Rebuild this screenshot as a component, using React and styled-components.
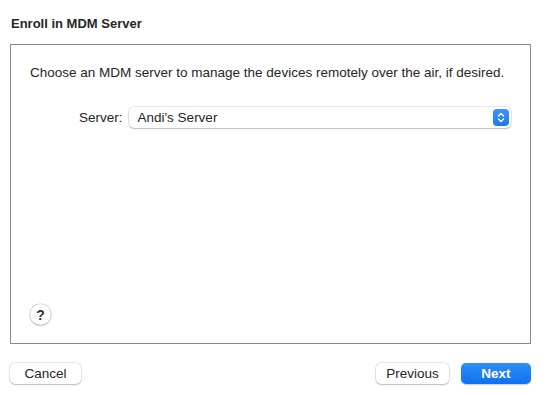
import React from "react";
import styled, { createGlobalStyle } from "styled-components";

const Global = createGlobalStyle`
  html, body { margin: 0; padding: 0; background: #ffffff; }
  body { font-family: "Liberation Sans", Arial, sans-serif; color: #262626; }
`;

const Window = styled.div`
  width: 546px;
  height: 395px;
  box-sizing: border-box;
  padding: 16px 15px 0 10px;
  display: flex;
  flex-direction: column;
`;

const Title = styled.h1`
  margin: 0 0 0 1px;
  font-size: 13px;
  line-height: 16px;
  font-weight: 700;
  color: #262626;
  height: 28px;
`;

const Panel = styled.div`
  box-sizing: border-box;
  width: 521px;
  height: 300px;
  border: 1px solid #8a8a8a;
  background: #ffffff;
  padding: 20px 19px 18px 19px;
  display: flex;
  flex-direction: column;
`;

const Intro = styled.p`
  margin: 0;
  font-size: 13.5px;
  line-height: 16px;
  color: #262626;
`;

const Row = styled.div`
  display: flex;
  align-items: center;
  margin-top: 26px;
  padding-left: 49px;
  gap: 6px;
`;

const Label = styled.span`
  font-size: 13.5px;
  color: #262626;
`;

const Select = styled.div`
  flex: 1;
  height: 21px;
  box-sizing: border-box;
  border-radius: 5px;
  background: #ffffff;
  box-shadow: 0 0 0 0.5px rgba(0, 0, 0, 0.18), 0 1px 1.5px rgba(0, 0, 0, 0.18);
  display: flex;
  align-items: center;
  padding: 0 2px 0 9px;
  font-size: 13.5px;
  color: #262626;
`;

const SelectText = styled.span`
  flex: 1;
`;

const Stepper = styled.span`
  width: 16px;
  height: 17px;
  border-radius: 4px;
  background: linear-gradient(#3d95f8, #1a79f2);
  display: flex;
  align-items: center;
  justify-content: center;
`;

const Help = styled.button`
  margin-top: auto;
  width: 21px;
  height: 21px;
  border-radius: 50%;
  border: none;
  background: #ffffff;
  box-shadow: 0 0 0 0.5px rgba(0, 0, 0, 0.22), 0 1px 1.5px rgba(0, 0, 0, 0.2);
  font-family: "Liberation Sans", Arial, sans-serif;
  font-size: 14px;
  font-weight: 700;
  color: #333;
  padding: 0;
  display: flex;
  align-items: center;
  justify-content: center;
`;

const Footer = styled.div`
  display: flex;
  align-items: center;
  margin-top: 19px;
  width: 521px;
`;

const Spacer = styled.div`
  flex: 1;
`;

const Button = styled.button`
  height: 21px;
  width: ${(p) => p.$w}px;
  margin-left: ${(p) => p.$ml || 0}px;
  border: none;
  border-radius: 5px;
  padding: 0;
  font-family: "Liberation Sans", Arial, sans-serif;
  font-size: 13.5px;
  background: ${(p) => (p.$primary ? "linear-gradient(#2f8ff8, #0f70f0)" : "#ffffff")};
  color: ${(p) => (p.$primary ? "#ffffff" : "#262626")};
  font-weight: ${(p) => (p.$primary ? 600 : 400)};
  box-shadow: ${(p) =>
    p.$primary
      ? "0 0.5px 1px rgba(0,0,0,0.2)"
      : "0 0 0 0.5px rgba(0,0,0,0.18), 0 1px 1.5px rgba(0,0,0,0.18)"};
`;

export default function App() {
  return (
    <>
      <Global />
      <Window>
        <Title>Enroll in MDM Server</Title>
        <Panel>
          <Intro>
            Choose an MDM server to manage the devices remotely over the air, if desired.
          </Intro>
          <Row>
            <Label>Server:</Label>
            <Select>
              <SelectText>Andi's Server</SelectText>
              <Stepper>
                <svg width="10" height="13" viewBox="0 0 10 13" fill="none">
                  <path d="M2.5 5 L5 2.5 L7.5 5" stroke="#fff" strokeWidth="1.5" strokeLinecap="round" strokeLinejoin="round" />
                  <path d="M2.5 8 L5 10.5 L7.5 8" stroke="#fff" strokeWidth="1.5" strokeLinecap="round" strokeLinejoin="round" />
                </svg>
              </Stepper>
            </Select>
          </Row>
          <Help>?</Help>
        </Panel>
        <Footer>
          <Button $w={71}>Cancel</Button>
          <Spacer />
          <Button $w={73}>Previous</Button>
          <Button $w={70} $ml={12} $primary>Next</Button>
        </Footer>
      </Window>
    </>
  );
}
